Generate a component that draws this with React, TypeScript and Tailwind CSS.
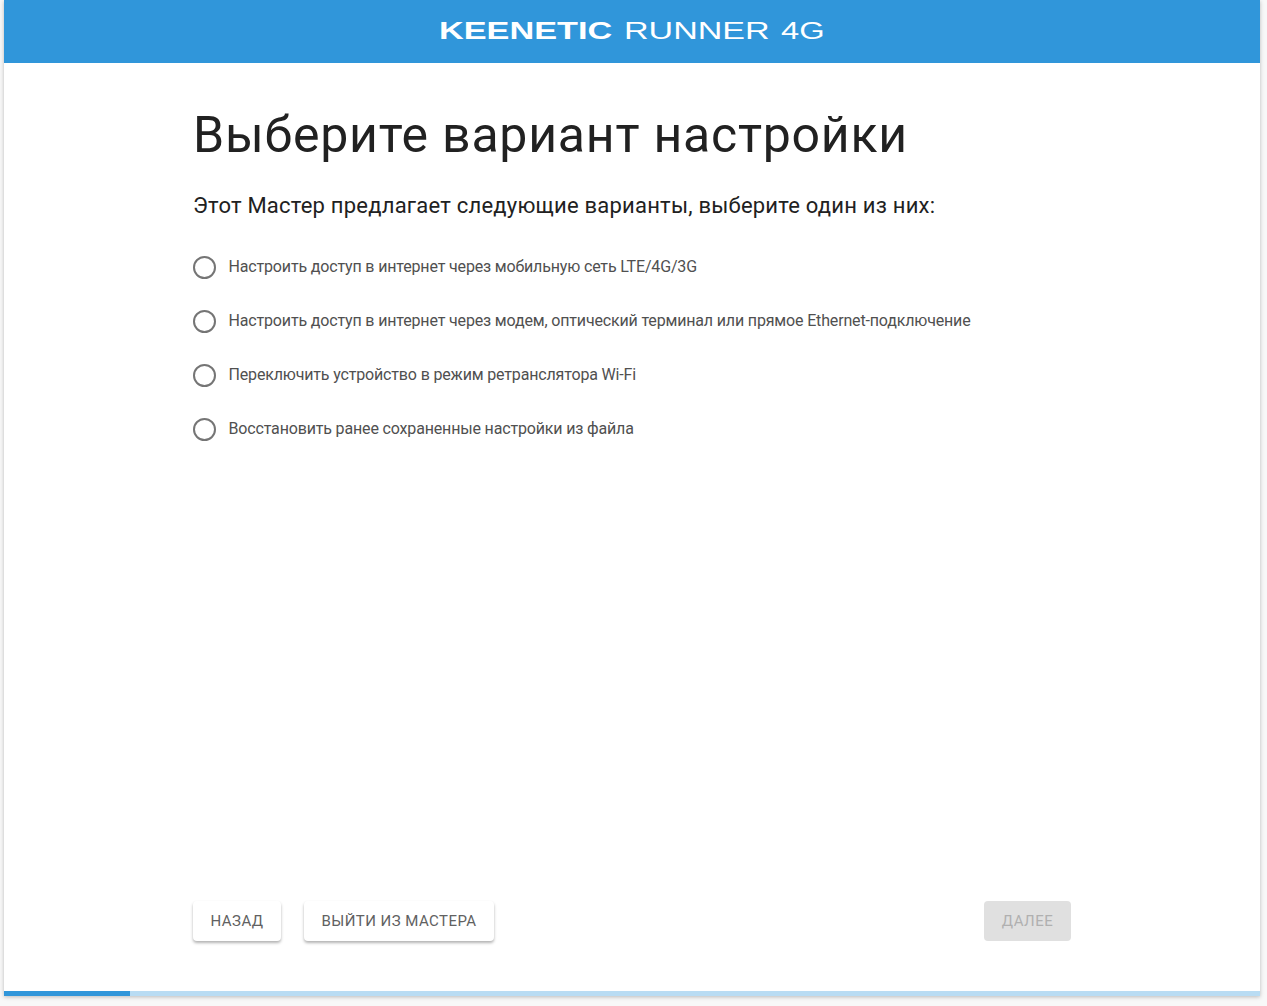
import React from 'react';

const options = [
  'Настроить доступ в интернет через мобильную сеть LTE/4G/3G',
  'Настроить доступ в интернет через модем, оптический терминал или прямое Ethernet-подключение',
  'Переключить устройство в режим ретранслятора Wi-Fi',
  'Восстановить ранее сохраненные настройки из файла',
];

export default function App() {
  return (
    <div className="h-[1006px] w-[1267px] overflow-hidden bg-[#f8f8f8] pl-[4px] pr-[7px] pb-[10px] font-['Roboto',sans-serif]">
      <div className="flex h-[996px] flex-col bg-white shadow-[0_1px_4px_rgba(0,0,0,0.25)]">
        <header className="flex h-[63px] shrink-0 items-center justify-center bg-[#3096da] pb-[1px]">
          <div className="flex w-[386px] items-baseline whitespace-nowrap font-['Liberation_Sans',sans-serif] text-[23px] leading-none text-white">
            <span className="w-[172px] origin-left scale-x-[1.49] font-bold">KEENETIC</span>
            <span className="ml-[13px] w-[145px] origin-left scale-x-[1.48]">RUNNER</span>
            <span className="ml-[12px] origin-left scale-x-[1.42]">4G</span>
          </div>
        </header>

        <main className="flex min-h-0 flex-1 flex-col pl-[189px] pr-[189px]">
          <h1 className="mt-[40px] text-[50px] leading-[64px] font-normal tracking-[0.77px] text-[#212121]">Выберите вариант настройки</h1>
          <p className="mt-[23px] text-[22px] leading-[32px] tracking-[0.22px] text-[#212121]">Этот Мастер предлагает следующие варианты, выберите один из них:</p>

          <div className="mt-[33px] flex flex-col gap-[30px]">
            {options.map((label) => (
              <label key={label} className="-ml-[0.5px] flex h-[24px] items-center gap-[13px] text-[16px] leading-[24px] tracking-[-0.16px] text-[#505050]">
                <span className="h-[23px] w-[23px] shrink-0 rounded-full border-2 border-[#757575]" />
                <span className="whitespace-nowrap">{label}</span>
              </label>
            ))}
          </div>

          <div className="mt-auto mb-[50px] flex items-center">
            <button className="h-[40px] w-[88px] rounded bg-white text-[15px] tracking-[0.5px] text-[#616161] shadow-[0_2px_3px_rgba(0,0,0,0.3)]">НАЗАД</button>
            <button className="ml-[23px] h-[40px] w-[190px] rounded bg-white text-[15px] tracking-[0.45px] text-[#616161] shadow-[0_2px_3px_rgba(0,0,0,0.3)]">ВЫЙТИ ИЗ МАСТЕРА</button>
            <button disabled className="ml-auto h-[40px] w-[87px] rounded bg-[#e0e0e0] text-[15px] tracking-[0.5px] text-[#b0b0b0]">ДАЛЕЕ</button>
          </div>
        </main>

        <div className="h-[5px] shrink-0 bg-[#b9dcf3]">
          <div className="h-full w-[126px] bg-[#3096da]" />
        </div>
      </div>
    </div>
  );
}
